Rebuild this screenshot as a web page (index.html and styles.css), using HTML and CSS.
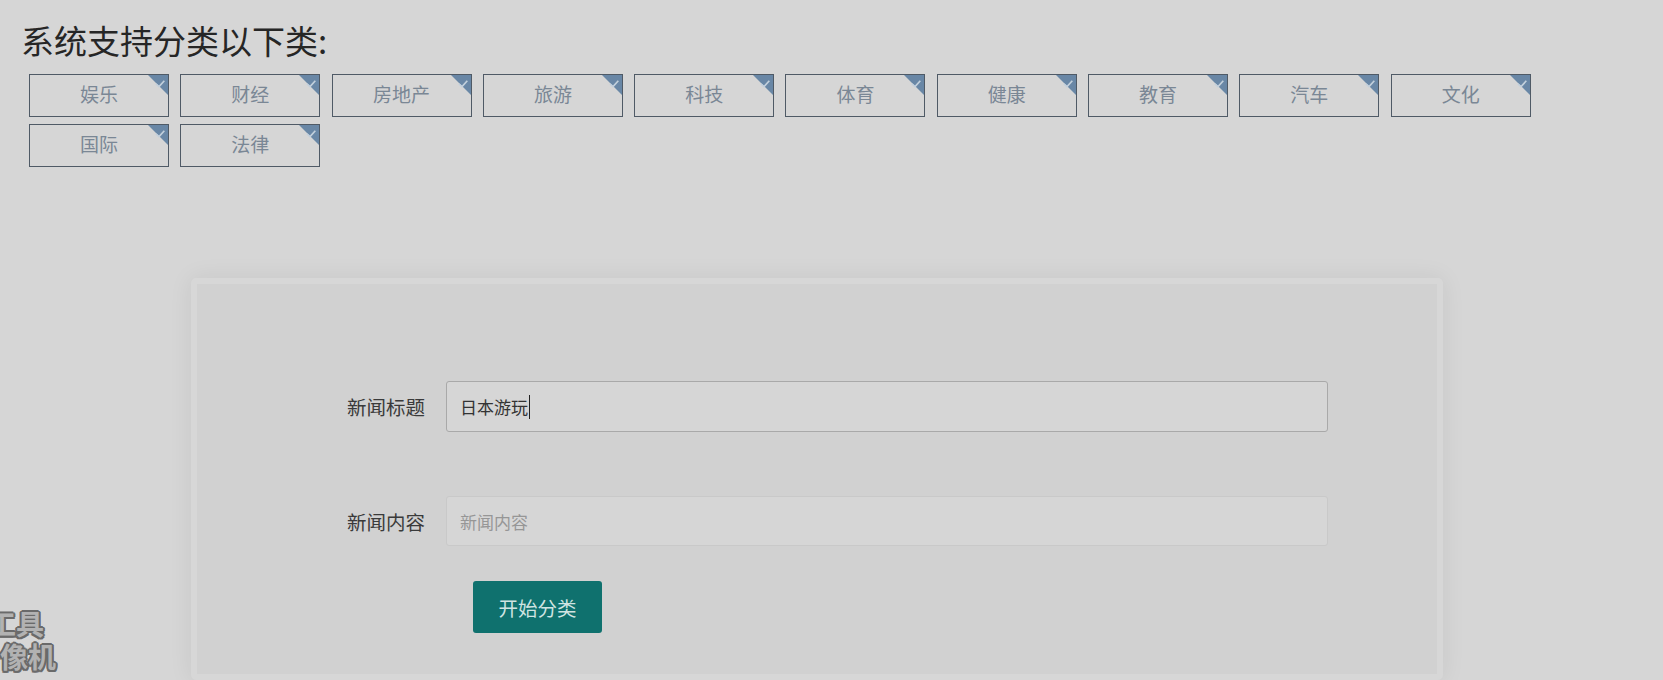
FILE: index.html
```html
<!DOCTYPE html>
<html lang="zh-CN">
<head>
    <meta charset="UTF-8">
    <meta name="viewport" content="width=device-width, initial-scale=1.0">
    <title>新闻分类</title>
    <link rel="stylesheet" href="styles.css">
</head>
<body>
    <h2 class="page-title">系统支持分类以下类:</h2>

    <ul class="tag-list">
        <li class="tag">娱乐<svg class="tag-mark" viewBox="0 0 19 19"><polygon points="0,0 19,0 19,19"/><polyline points="7.5,8.5 10.5,11 15.5,5.5"/></svg></li>
        <li class="tag">财经<svg class="tag-mark" viewBox="0 0 19 19"><polygon points="0,0 19,0 19,19"/><polyline points="7.5,8.5 10.5,11 15.5,5.5"/></svg></li>
        <li class="tag">房地产<svg class="tag-mark" viewBox="0 0 19 19"><polygon points="0,0 19,0 19,19"/><polyline points="7.5,8.5 10.5,11 15.5,5.5"/></svg></li>
        <li class="tag">旅游<svg class="tag-mark" viewBox="0 0 19 19"><polygon points="0,0 19,0 19,19"/><polyline points="7.5,8.5 10.5,11 15.5,5.5"/></svg></li>
        <li class="tag">科技<svg class="tag-mark" viewBox="0 0 19 19"><polygon points="0,0 19,0 19,19"/><polyline points="7.5,8.5 10.5,11 15.5,5.5"/></svg></li>
        <li class="tag">体育<svg class="tag-mark" viewBox="0 0 19 19"><polygon points="0,0 19,0 19,19"/><polyline points="7.5,8.5 10.5,11 15.5,5.5"/></svg></li>
        <li class="tag">健康<svg class="tag-mark" viewBox="0 0 19 19"><polygon points="0,0 19,0 19,19"/><polyline points="7.5,8.5 10.5,11 15.5,5.5"/></svg></li>
        <li class="tag">教育<svg class="tag-mark" viewBox="0 0 19 19"><polygon points="0,0 19,0 19,19"/><polyline points="7.5,8.5 10.5,11 15.5,5.5"/></svg></li>
        <li class="tag">汽车<svg class="tag-mark" viewBox="0 0 19 19"><polygon points="0,0 19,0 19,19"/><polyline points="7.5,8.5 10.5,11 15.5,5.5"/></svg></li>
        <li class="tag">文化<svg class="tag-mark" viewBox="0 0 19 19"><polygon points="0,0 19,0 19,19"/><polyline points="7.5,8.5 10.5,11 15.5,5.5"/></svg></li>
        <li class="tag">国际<svg class="tag-mark" viewBox="0 0 19 19"><polygon points="0,0 19,0 19,19"/><polyline points="7.5,8.5 10.5,11 15.5,5.5"/></svg></li>
        <li class="tag">法律<svg class="tag-mark" viewBox="0 0 19 19"><polygon points="0,0 19,0 19,19"/><polyline points="7.5,8.5 10.5,11 15.5,5.5"/></svg></li>
    </ul>

    <div class="card">
        <div class="form-row">
            <label class="form-label">新闻标题</label>
            <div class="field">日本游玩<span class="caret"></span></div>
        </div>
        <div class="form-row row-gap">
            <label class="form-label">新闻内容</label>
            <input class="field field-empty" type="text" placeholder="新闻内容">
        </div>
        <button class="btn-classify">开始分类</button>
    </div>

    <div class="watermark">
        <span class="wm-line wm-first">工具</span>
        <span class="wm-line">像机</span>
    </div>
</body>
</html>
```

FILE: styles.css
```css
* {
    margin: 0;
    padding: 0;
    box-sizing: border-box;
}

html, body {
    width: 100%;
    height: 100%;
    overflow: hidden;
}

body {
    position: relative;
    background-color: #d6d6d6;
    font-family: "Noto Sans CJK SC", "Liberation Sans", sans-serif;
    color: #333;
}

.page-title {
    font-size: 33px;
    font-weight: normal;
    line-height: 40px;
    color: #262626;
    padding: 20px 0 0 21px;
}

.tag-list {
    list-style: none;
    display: flex;
    flex-wrap: wrap;
    gap: 7px 11.3px;
    max-width: 1540px;
    padding-left: 29px;
    margin-top: 14px;
}

.tag {
    position: relative;
    width: 140px;
    height: 43px;
    border: 1px solid #4f5a66;
    color: #7a8795;
    font-size: 19px;
    line-height: 38px;
    text-align: center;
}

.tag-mark {
    position: absolute;
    top: 0;
    right: 0;
    width: 20px;
    height: 20px;
}

.tag-mark polygon {
    fill: #6987a6;
}

.tag-mark polyline {
    fill: none;
    stroke: #c3d0dc;
    stroke-width: 1.6;
}

.card {
    width: 1252px;
    margin: 111px 0 0 191px;
    padding: 97px 0 41px;
    background: #d1d1d1;
    border: 6px solid #d7d7d7;
    border-radius: 5px;
    box-shadow: 0 0 24px rgba(0, 0, 0, 0.07);
}

.form-row {
    display: flex;
    align-items: center;
}

.row-gap {
    margin-top: 64px;
}

.form-label {
    width: 228px;
    margin-right: 21px;
    text-align: right;
    font-size: 19.5px;
    color: #3a3a3a;
}

.field {
    width: 882px;
    height: 51px;
    padding: 0 13px;
    background: #d6d6d6;
    border: 1px solid #a9a9a9;
    border-radius: 3px;
    font-family: inherit;
    font-size: 17px;
    color: #333;
    display: flex;
    align-items: center;
    outline: none;
}

.field-empty {
    height: 50px;
    border-color: #c9c9c9;
}

.field-empty::placeholder {
    color: #969696;
}

.caret {
    display: inline-block;
    width: 1px;
    height: 24px;
    margin-left: 1px;
    background: #222;
}

.btn-classify {
    display: block;
    width: 129px;
    height: 52px;
    margin: 35px 0 0 276px;
    background: #0f716e;
    border: none;
    border-radius: 3px;
    color: #d0e4e2;
    font-family: inherit;
    font-size: 19.5px;
}

.watermark {
    position: absolute;
    left: 0;
    top: 607px;
    font-size: 28px;
    font-weight: bold;
    line-height: 33px;
    color: #b2b2b2;
    text-shadow: 2px 0 #6a6a6a, -2px 0 #6a6a6a, 0 2px #6a6a6a, 0 -2px #6a6a6a,
                 1.5px 1.5px #6a6a6a, -1.5px -1.5px #6a6a6a, 1.5px -1.5px #6a6a6a, -1.5px 1.5px #6a6a6a;
}

.wm-line {
    display: block;
    white-space: nowrap;
}

.wm-first {
    margin-left: -12px;
}
```
